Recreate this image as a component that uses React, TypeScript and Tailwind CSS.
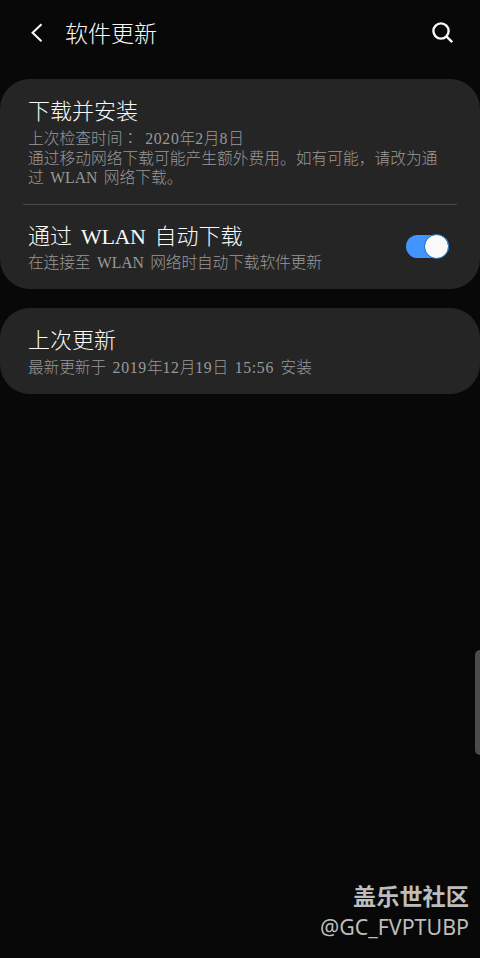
import { useState } from "react";

const titleClass = "text-[22px] leading-[26px] text-[#fafafa] whitespace-nowrap";
const noteClass = "text-[15.75px] leading-[19.5px] text-[#999999] whitespace-nowrap";

// Digits run slightly wider than the surrounding text
function Num({ children }: { children: string }) {
  return <span className="tracking-[0.7px]">{children}</span>;
}

export default function App() {
  const [autoDownload, setAutoDownload] = useState(true);

  return (
    <div className="relative flex h-[958px] w-[480px] flex-col overflow-hidden bg-[#080808] font-['Liberation_Serif','Noto_Sans_CJK_SC',serif] font-light">
      {/* Header */}
      <header className="flex h-[79px] shrink-0 items-start pt-[18px] pr-[26px] pl-[31px]">
        <button className="mt-[5px] h-5 w-3" aria-label="返回">
          <svg width="12" height="20" viewBox="0 0 12 20" fill="none" stroke="#fafafa" strokeWidth="2">
            <path d="M10.5 1.3 L1.6 9.8 L10.5 18.3" />
          </svg>
        </button>
        <h1 className="mt-px ml-[22px] text-[23px] leading-8 whitespace-nowrap text-[#fafafa]">软件更新</h1>
        <button className="mt-[3px] ml-auto h-[23px] w-[23px]" aria-label="搜索">
          <svg width="23" height="23" viewBox="0 0 23 23" fill="none" stroke="#fafafa">
            <circle cx="10" cy="10" r="7.6" strokeWidth="2.4" />
            <path d="M15.4 15.4 L21.2 21.2" strokeWidth="2.4" />
          </svg>
        </button>
      </header>

      {/* Download settings */}
      <section className="h-[210px] shrink-0 rounded-[30px] bg-[#252525]">
        <div className="h-[125px] pt-5 pl-7">
          <h2 className={titleClass}>下载并安装</h2>
          <div className={`${noteClass} mt-1`}>
            <p className="[word-spacing:3px]">
              上次检查时间<span className="font-['Noto_Sans_CJK_TC',sans-serif] leading-none">：</span> <Num>2020</Num>年<Num>2</Num>月<Num>8</Num>日
            </p>
            <p>通过移动网络下载可能产生额外费用。如有可能，请改为通</p>
            <p className="[word-spacing:2.5px]">过 WLAN 网络下载。</p>
          </div>
        </div>
        <div className="mx-[23px] h-px bg-[#484848]" />
        <div className="flex items-start justify-between pt-[19px] pr-[31px] pl-7">
          <div>
            <h2 className={`${titleClass} [word-spacing:3.5px]`}>
              通过 <span className="tracking-[-0.4px]">WLAN</span> 自动下载
            </h2>
            <p className={`${noteClass} mt-[3px] tracking-[-0.15px] [word-spacing:2.8px]`}>在连接至 WLAN 网络时自动下载软件更新</p>
          </div>
          <button
            role="switch"
            aria-checked={autoDownload}
            aria-label="自动下载"
            onClick={() => setAutoDownload(!autoDownload)}
            className={`mt-[11px] flex h-[23px] w-[43px] items-center rounded-full ${autoDownload ? "justify-end bg-[#4294ff]" : "justify-start bg-[#555]"}`}
          >
            <span className="h-[25px] w-[25px] shrink-0 rounded-full border border-[#1669b0] bg-[#fafafa]" />
          </button>
        </div>
      </section>

      {/* Last update */}
      <section className="mt-[19px] h-[86px] shrink-0 rounded-[30px] bg-[#252525] pt-5 pl-7">
        <h2 className={titleClass}>上次更新</h2>
        <p className={`${noteClass} mt-[3.5px] tracking-[-0.15px] [word-spacing:2.8px]`}>
          最新更新于 <Num>2019</Num>年<Num>12</Num>月<Num>19</Num>日 <Num>15:56</Num> 安装
        </p>
      </section>

      {/* Edge panel handle */}
      <div className="absolute top-[650px] right-0 h-[105px] w-[5px] rounded-l-[5px] bg-[#4b4b4b]" />

      {/* Watermark */}
      <footer className="mt-auto flex flex-col items-end pr-[11px] pb-4 text-[#bdbdbd]">
        <p className="mb-px font-['Noto_Sans_CJK_SC',sans-serif] text-[23.2px] leading-8 font-bold">盖乐世社区</p>
        <p className="font-['Noto_Sans',sans-serif] text-[21.4px] leading-[30px] font-normal">@GC_FVPTUBP</p>
      </footer>
    </div>
  );
}
